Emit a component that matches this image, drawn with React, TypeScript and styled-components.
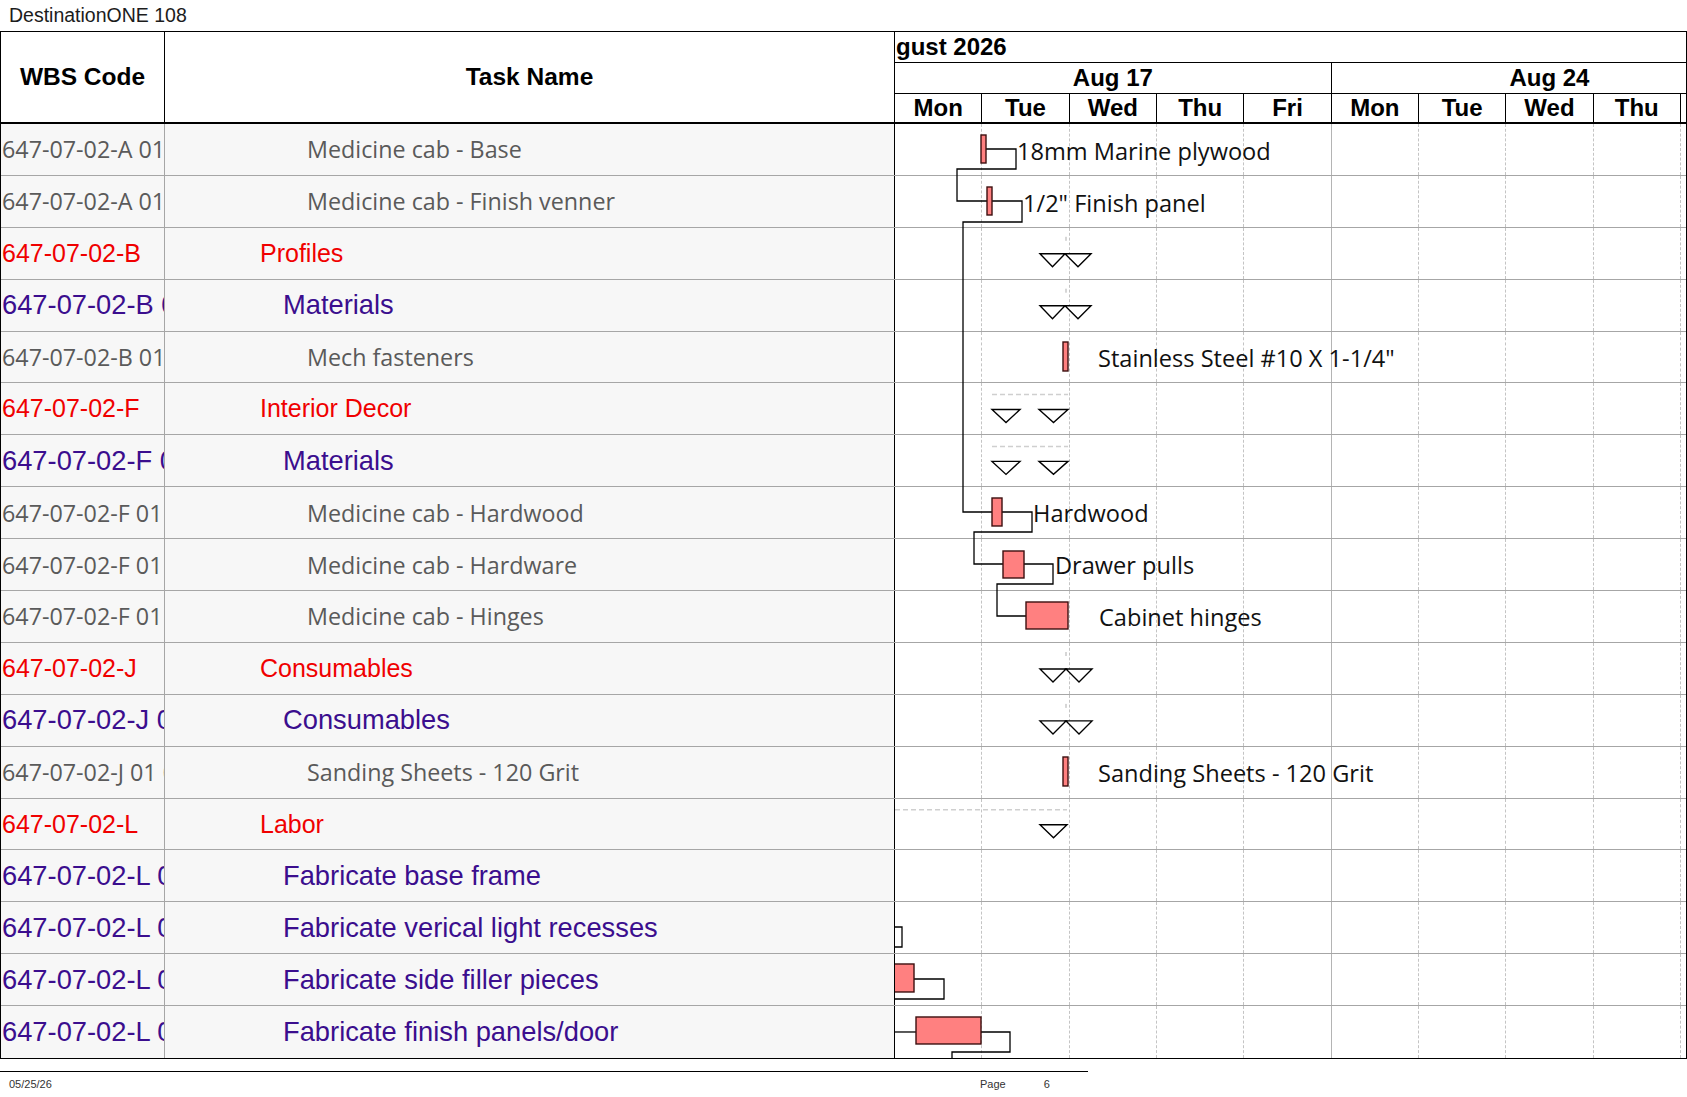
import React from 'react';
import styled, { createGlobalStyle } from 'styled-components';

const ROW_H = 51.9;
const DAY_W = 87.33;
const BODY_TOP = 124;
const CHART_LEFT = 895;
const CHART_W = 791;

type Level = 1 | 2 | 3;

interface Task {
  wbs: string;
  name: string;
  level: Level;
}

const tasks: Task[] = [
  { wbs: '647-07-02-A 01 01', name: 'Medicine cab - Base', level: 3 },
  { wbs: '647-07-02-A 01 02', name: 'Medicine cab - Finish venner', level: 3 },
  { wbs: '647-07-02-B', name: 'Profiles', level: 1 },
  { wbs: '647-07-02-B 01', name: 'Materials', level: 2 },
  { wbs: '647-07-02-B 01 01', name: 'Mech fasteners', level: 3 },
  { wbs: '647-07-02-F', name: 'Interior Decor', level: 1 },
  { wbs: '647-07-02-F 01', name: 'Materials', level: 2 },
  { wbs: '647-07-02-F 01 01', name: 'Medicine cab - Hardwood', level: 3 },
  { wbs: '647-07-02-F 01 02', name: 'Medicine cab - Hardware', level: 3 },
  { wbs: '647-07-02-F 01 03', name: 'Medicine cab - Hinges', level: 3 },
  { wbs: '647-07-02-J', name: 'Consumables', level: 1 },
  { wbs: '647-07-02-J 01', name: 'Consumables', level: 2 },
  { wbs: '647-07-02-J 01 01', name: 'Sanding Sheets - 120 Grit', level: 3 },
  { wbs: '647-07-02-L', name: 'Labor', level: 1 },
  { wbs: '647-07-02-L 01', name: 'Fabricate base frame', level: 2 },
  { wbs: '647-07-02-L 02', name: 'Fabricate verical light recesses', level: 2 },
  { wbs: '647-07-02-L 03', name: 'Fabricate side filler pieces', level: 2 },
  { wbs: '647-07-02-L 04', name: 'Fabricate finish panels/door', level: 2 },
];

const days = ['Mon', 'Tue', 'Wed', 'Thu', 'Fri', 'Mon', 'Tue', 'Wed', 'Thu'];
const weeks = ['Aug 17', 'Aug 24'];

const rowTop = (i: number) => BODY_TOP + ROW_H * i;

// bars: x1, x2, top, bottom (page coordinates)
const bars = [
  [981, 986, 135, 163],
  [987, 992, 187, 215],
  [1063, 1068, 342, 371],
  [992, 1002, 498, 526],
  [1003, 1024, 551, 578],
  [1026, 1068, 602, 629],
  [1063, 1068, 757, 786],
  [894, 914, 964, 992],
  [916, 981, 1017, 1044],
];

const links = [
  '986,149 1016,149 1016,169 957,169 957,201 987,201',
  '992,201 1022,201 1022,222 963,222 963,512 992,512',
  '1002,512 1032,512 1032,532 974,532 974,564 1003,564',
  '1024,564 1053,564 1053,584 997,584 997,616 1026,616',
  '894,927 902,927 902,947 894,947',
  '914,979 944,979 944,999 894,999',
  '894,1032 916,1032',
  '981,1032 1010,1032 1010,1052 952,1052 952,1062',
];

const labels: [number, number, string][] = [
  [1017, 160, '18mm Marine plywood'],
  [1023, 212, '1/2" Finish panel'],
  [1098, 367, 'Stainless Steel #10 X 1-1/4"'],
  [1033, 522, 'Hardwood'],
  [1055, 574, 'Drawer pulls'],
  [1099, 626, 'Cabinet hinges'],
  [1098, 782, 'Sanding Sheets - 120 Grit'],
];

// milestone markers: row, x1, x2
const markers: [number, number, number][] = [
  [2, 1040, 1065], [2, 1065, 1091],
  [3, 1040, 1065], [3, 1065, 1091],
  [5, 992, 1020], [5, 1039, 1068],
  [6, 992, 1020], [6, 1039, 1068],
  [10, 1040, 1066], [10, 1066, 1092],
  [11, 1040, 1066], [11, 1066, 1092],
  [13, 1040, 1067],
];

// dashed summary bars: row, x1, x2
const summaries: [number, number, number][] = [
  [5, 992, 1068],
  [6, 992, 1068],
  [13, 895, 1067],
];

const ticks = [2, 3, 10, 11];

const GlobalStyle = createGlobalStyle`
  html, body {
    margin: 0;
    padding: 0;
    background: #fff;
  }
  body {
    font-family: 'Liberation Sans', Arial, sans-serif;
    color: #000;
  }
`;

const Page = styled.div`
  width: 1687px;
`;

const Title = styled.div`
  height: 31px;
  padding-left: 9px;
  font-size: 19.5px;
  line-height: 30px;
  color: #1c1c1c;
  box-sizing: border-box;
`;

const Sheet = styled.div`
  border: 1px solid #000;
  box-sizing: border-box;
  width: 1687px;
`;

const Header = styled.div`
  display: grid;
  grid-template-columns: 164px 730px 1fr;
  height: 92px;
  box-sizing: border-box;
  border-bottom: 2px solid #000;
`;

const HeadCell = styled.div`
  display: flex;
  align-items: center;
  justify-content: center;
  font-size: 24.5px;
  font-weight: 700;
  border-right: 1px solid #000;
`;

const TimeScale = styled.div`
  display: flex;
  flex-direction: column;
  overflow: hidden;
  font-size: 24px;
  font-weight: 700;
`;

const MonthRow = styled.div`
  height: 31px;
  box-sizing: border-box;
  border-bottom: 1px solid #000;
  line-height: 30px;
  white-space: nowrap;
  overflow: hidden;
  text-indent: -31px;
`;

const WeekRow = styled.div`
  display: flex;
  height: 31px;
  box-sizing: border-box;
  border-bottom: 1px solid #000;
`;

const WeekCell = styled.div`
  flex: 0 0 ${DAY_W * 5}px;
  box-sizing: border-box;
  border-right: 1px solid #000;
  text-align: center;
  line-height: 30px;
`;

const DayRow = styled.div`
  display: flex;
  flex: 1;
`;

const DayCell = styled.div`
  flex: 0 0 ${DAY_W}px;
  box-sizing: border-box;
  border-right: 1px solid #000;
  display: flex;
  align-items: center;
  justify-content: center;
`;

const Body = styled.div`
  position: relative;
`;

const Row = styled.div`
  display: grid;
  grid-template-columns: 164px 730px 1fr;
  height: ${ROW_H}px;
  box-sizing: border-box;
  border-bottom: 1px solid #a6a6a6;

  &:last-of-type {
    border-bottom: none;
  }
`;

const levelFont = {
  1: `font-family: 'Liberation Sans', Arial, sans-serif; font-size: 25px; color: #f00000;`,
  2: `font-family: 'Liberation Sans', Arial, sans-serif; font-size: 27.3px; color: #3b0e8e;`,
  3: `font-family: 'Open Sans', 'Noto Sans', sans-serif; font-size: 23.3px; color: #5a5a5a;`,
};

const levelIndent = { 1: 95, 2: 118, 3: 142 };

const WbsCell = styled.div<{ $level: Level }>`
  display: flex;
  align-items: center;
  background: #f7f7f7;
  border-right: 1px solid #a6a6a6;
  padding-left: 1px;
  white-space: nowrap;
  overflow: hidden;
  ${({ $level }) => levelFont[$level]}
`;

const TaskCell = styled.div<{ $level: Level }>`
  display: flex;
  align-items: center;
  background: #f7f7f7;
  border-right: 1px solid #000;
  padding-left: ${({ $level }) => levelIndent[$level]}px;
  white-space: nowrap;
  overflow: hidden;
  ${({ $level }) => levelFont[$level]}
`;

const Strip = styled.div`
  display: flex;
  overflow: hidden;
  background: #fff;
`;

const GridDay = styled.div<{ $weekEnd?: boolean }>`
  flex: 0 0 ${DAY_W}px;
  box-sizing: border-box;
  border-right: 1px ${({ $weekEnd }) => ($weekEnd ? 'solid #b4b4b4' : 'dashed #c4c4c4')};
`;

const Overlay = styled.svg`
  position: absolute;
  left: ${CHART_LEFT - 1}px;
  top: 0;
  pointer-events: none;
  overflow: hidden;
`;

const BarLabel = styled.text`
  font-family: 'Open Sans', 'Noto Sans', sans-serif;
  font-size: 23.6px;
  fill: #111;
`;

const Footer = styled.div`
  width: 1088px;
  margin-top: 12px;
  border-top: 1px solid #000;
  display: flex;
  padding-top: 6px;
  font-size: 11px;
  line-height: 13px;
  color: #333;
`;

const FooterDate = styled.span`
  padding-left: 9px;
  flex: 1;
`;

const PageInfo = styled.span`
  display: flex;
  gap: 38px;
  width: 108px;
`;

const Gantt: React.FC = () => {
  const h = ROW_H * tasks.length;
  return (
    <Overlay
      width={CHART_W}
      height={h}
      viewBox={`${CHART_LEFT} ${BODY_TOP} ${CHART_W} ${h}`}
    >
      {summaries.map(([r, x1, x2], i) => (
        <line
          key={`s${i}`}
          x1={x1}
          x2={x2}
          y1={rowTop(r) + 11}
          y2={rowTop(r) + 11}
          stroke="#cfcfcf"
          strokeWidth={1.5}
          strokeDasharray="5 3"
        />
      ))}
      {ticks.map((r) => (
        <rect key={`t${r}`} x={1065} y={rowTop(r) + 9} width={2} height={4} fill="#d6d6d6" />
      ))}
      {links.map((p, i) => (
        <polyline key={`l${i}`} points={p} fill="none" stroke="#000" strokeWidth={1.3} />
      ))}
      {bars.map(([x1, x2, t, b], i) => (
        <rect
          key={`b${i}`}
          x={x1}
          y={t}
          width={x2 - x1}
          height={b - t}
          fill="#ff8080"
          stroke="#3c0f0f"
          strokeWidth={1.4}
        />
      ))}
      {markers.map(([r, x1, x2], i) => {
        const top = rowTop(r) + 26;
        return (
          <polygon
            key={`m${i}`}
            points={`${x1},${top} ${x2},${top} ${(x1 + x2) / 2},${top + 13}`}
            fill="#fff"
            stroke="#000"
            strokeWidth={1.4}
          />
        );
      })}
      {labels.map(([x, y, text], i) => (
        <BarLabel key={`x${i}`} x={x} y={y}>
          {text}
        </BarLabel>
      ))}
    </Overlay>
  );
};

const App: React.FC = () => {
  return (
    <Page>
      <GlobalStyle />
      <Title>DestinationONE 108</Title>
      <Sheet>
        <Header>
          <HeadCell>WBS Code</HeadCell>
          <HeadCell>Task Name</HeadCell>
          <TimeScale>
            <MonthRow>August 2026</MonthRow>
            <WeekRow>
              {weeks.map((w) => (
                <WeekCell key={w}>{w}</WeekCell>
              ))}
            </WeekRow>
            <DayRow>
              {days.map((d, i) => (
                <DayCell key={i}>{d}</DayCell>
              ))}
              <DayCell />
            </DayRow>
          </TimeScale>
        </Header>
        <Body>
          {tasks.map((t, i) => (
            <Row key={i}>
              <WbsCell $level={t.level}>{t.wbs}</WbsCell>
              <TaskCell $level={t.level}>{t.name}</TaskCell>
              <Strip>
                {days.map((_, d) => (
                  <GridDay key={d} $weekEnd={d === 4} />
                ))}
                <GridDay />
              </Strip>
            </Row>
          ))}
          <Gantt />
        </Body>
      </Sheet>
      <Footer>
        <FooterDate>05/25/26</FooterDate>
        <PageInfo>
          <span>Page</span>
          <span>6</span>
        </PageInfo>
      </Footer>
    </Page>
  );
};

export default App;
